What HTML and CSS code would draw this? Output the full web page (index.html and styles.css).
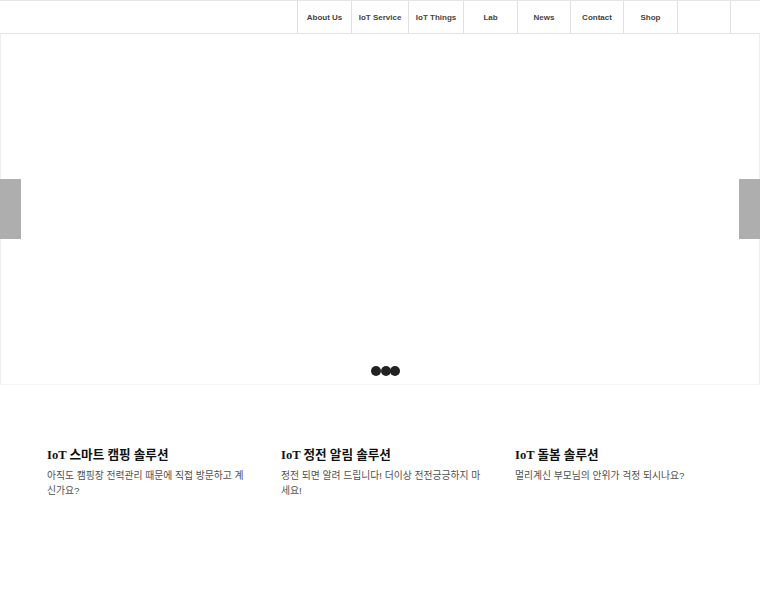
FILE: index.html
```html
<!DOCTYPE html>
<html lang="ko">
<head>
<meta charset="utf-8">
<title>IoT</title>
<link rel="stylesheet" href="styles.css">
</head>
<body>
<header class="header">
  <nav class="nav">
    <a class="nav-item w54" href="#">About Us</a>
    <a class="nav-item w57" href="#">IoT Service</a>
    <a class="nav-item w55" href="#">IoT Things</a>
    <a class="nav-item w54" href="#">Lab</a>
    <a class="nav-item w53" href="#">News</a>
    <a class="nav-item w53" href="#">Contact</a>
    <a class="nav-item w54" href="#">Shop</a>
    <a class="nav-item w53" href="#"></a>
    <a class="nav-item w30" href="#"></a>
  </nav>
</header>
<section class="slider">
  <div class="arrow arrow-left"></div>
  <div class="arrow arrow-right"></div>
  <div class="dots">
    <span class="dot"></span><span class="dot"></span><span class="dot"></span>
  </div>
</section>
<section class="features">
  <div class="feature">
    <h3 class="feature-title">IoT 스마트 캠핑 솔루션</h3>
    <p class="feature-desc">아직도 캠핑장 전력관리 때문에 직접 방문하고 계신가요?</p>
  </div>
  <div class="feature">
    <h3 class="feature-title">IoT 정전 알림 솔루션</h3>
    <p class="feature-desc">정전 되면 알려 드립니다! 더이상 전전긍긍하지 마세요!</p>
  </div>
  <div class="feature">
    <h3 class="feature-title">IoT 돌봄 솔루션</h3>
    <p class="feature-desc">멀리계신 부모님의 안위가 걱정 되시나요?</p>
  </div>
</section>
</body>
</html>
```

FILE: styles.css
```css
html, body {
  margin: 0;
  padding: 0;
  background: #fff;
  overflow: hidden;
}
body {
  width: 760px;
  font-family: "Liberation Sans", "Noto Sans CJK KR", sans-serif;
}
.header {
  height: 32px;
  border-top: 1px solid #e6e6e6;
  border-bottom: 1px solid #e3e3e3;
  display: flex;
  justify-content: flex-end;
}
.nav {
  display: flex;
  height: 32px;
}
.nav-item {
  box-sizing: border-box;
  border-left: 1px solid #e0e0e0;
  display: flex;
  align-items: center;
  justify-content: center;
  font-size: 8px;
  font-weight: bold;
  color: #444;
  text-decoration: none;
  padding-top: 1px;
  white-space: nowrap;
}
.w53 { width: 53px; }
.w54 { width: 54px; }
.w55 { width: 55px; }
.w57 { width: 57px; }
.w30 { width: 30px; }
.slider {
  position: relative;
  box-sizing: border-box;
  height: 351px;
  border-left: 1px solid #eeeeee;
  border-right: 1px solid #eeeeee;
  border-bottom: 1px solid #f5f5f5;
}
.arrow {
  position: absolute;
  top: 145px;
  width: 21px;
  height: 60px;
  background: #aeaeae;
}
.arrow-left { left: -1px; }
.arrow-right { right: -1px; }
.dots {
  position: absolute;
  left: 370px;
  top: 332px;
  display: flex;
}
.dot {
  width: 10px;
  height: 10px;
  border-radius: 50%;
  background: #222;
  margin-right: -0.5px;
}
.features {
  display: flex;
  padding: 60px 0 0 47px;
}
.feature {
  width: 234px;
}
.feature-title {
  margin: 0;
  font-family: "Liberation Serif", "Noto Sans CJK KR", serif;
  font-size: 12.6px;
  font-weight: bold;
  line-height: 20px;
  color: #111;
}
.feature-desc {
  margin: 3px 0 0 0;
  width: 202px;
  font-family: "Liberation Sans", "Noto Sans CJK KR", sans-serif;
  font-size: 9.8px;
  line-height: 15px;
  color: #505050;
}
```
